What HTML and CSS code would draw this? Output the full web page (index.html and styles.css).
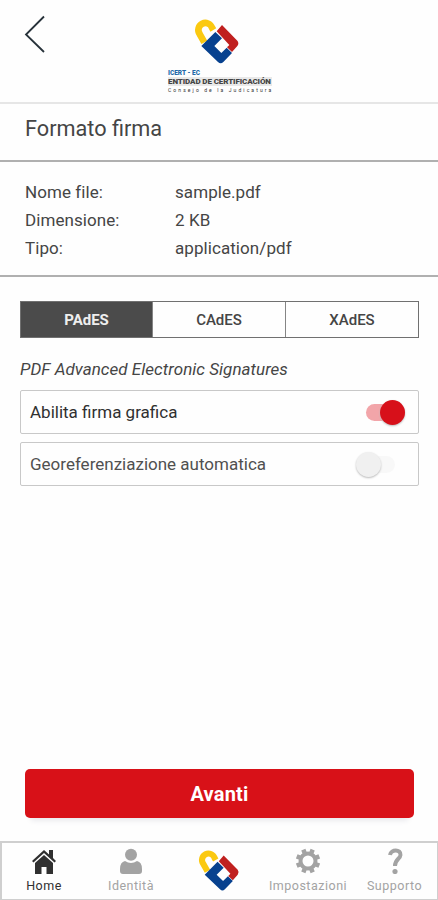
FILE: index.html
```html
<!DOCTYPE html>
<html lang="it">
<head>
    <meta charset="UTF-8">
    <meta name="viewport" content="width=device-width, initial-scale=1.0">
    <title>Formato firma</title>
    <link rel="stylesheet" href="styles.css">
</head>
<body>
    <svg width="0" height="0" class="defs">
        <symbol id="logo" viewBox="0 0 144 144">
            <path d="M31 73 L17 48 A21 21 0 1 1 54 29 L58 36" fill="none" stroke="#fbc910" stroke-width="20"/>
            <path d="M22 84 L64 42 L84 61 L61 84 L82 105 L98 89 L114 105 L88 132 Q80 140 72 132 Z" fill="#07418f"/>
            <path d="M84 21 L130 68 Q136 76 130 84 L114 102 L99 88 L106 81 L68 40 Z" fill="#c0201f"/>
        </symbol>
    </svg>
    <div id="container">
        <header>
            <button class="back" aria-label="Indietro">
                <svg width="22" height="40" viewBox="0 0 22 40"><path d="M20 2.500 L2 20.500 L20 38" fill="none" stroke="#27323a" stroke-width="1.8"/></svg>
            </button>
            <div class="brand">
                <svg class="brand-logo"><use href="#logo"/></svg>
                <span class="brand-code">ICERT - EC</span>
                <span class="brand-name">ENTIDAD DE CERTIFICACIÓN</span>
                <span class="brand-sub">Consejo de la Judicatura</span>
            </div>
        </header>
        <h1>Formato firma</h1>
        <dl class="file-info">
            <dt>Nome file:</dt><dd>sample.pdf</dd>
            <dt>Dimensione:</dt><dd>2 KB</dd>
            <dt>Tipo:</dt><dd>application/pdf</dd>
        </dl>
        <main>
            <div class="tabs">
                <button class="active">PAdES</button>
                <button>CAdES</button>
                <button>XAdES</button>
            </div>
            <p class="description">PDF Advanced Electronic Signatures</p>
            <div class="option dark">
                <span>Abilita firma grafica</span>
                <span class="switch on"><i></i></span>
            </div>
            <div class="option">
                <span>Georeferenziazione automatica</span>
                <span class="switch"><i></i></span>
            </div>
        </main>
        <button class="next">Avanti</button>
        <nav>
            <a class="selected">
                <svg width="26" height="26" viewBox="0 0 26 26"><path d="M1 13 L13 2 L18 6.5 V2 H22 V10 L25 13 L23.5 14.5 L13 5 L2.5 14.5 Z M4 15 L13 7 L22 15 V26 H15.500 V19 H10.500 V26 H4 Z" fill="currentColor"/></svg>
                <span>Home</span>
            </a>
            <a>
                <svg width="26" height="26" viewBox="0 0 26 26"><circle cx="13" cy="6.7" r="6" fill="currentColor"/><path d="M7 13 Q13 17 19 13 Q24 14 24 21 V23 Q24 26 21 26 H5 Q2 26 2 23 V21 Q2 14 7 13 Z" fill="currentColor"/></svg>
                <span>Identità</span>
            </a>
            <a class="nav-brand"><svg class="nav-logo"><use href="#logo"/></svg></a>
            <a>
                <svg width="26" height="26" viewBox="0 0 26 26"><circle cx="13" cy="13" r="7.5" fill="none" stroke="currentColor" stroke-width="4"/><g stroke="currentColor" stroke-width="4.500"><path id="tooth" d="M13 .8 V5 M13 21 V25.200" transform="rotate(22.5 13 13)"/><use href="#tooth" transform="rotate(45 13 13)"/><use href="#tooth" transform="rotate(90 13 13)"/><use href="#tooth" transform="rotate(135 13 13)"/></g></svg>
                <span>Impostazioni</span>
            </a>
            <a>
                <svg width="26" height="26" viewBox="0 0 26 26"><path d="M8 7 C9 1 19 1 18.500 7 C18.300 11 13 11 13 18" fill="none" stroke="currentColor" stroke-width="4"/><circle cx="13" cy="23.500" r="2.600" fill="currentColor"/></svg>
                <span>Supporto</span>
            </a>
        </nav>
    </div>
</body>
</html>
```
FILE: styles.css
```css
* {
    box-sizing: border-box;
}
body {
    margin: 0;
    background: #fefefe;
    color: #454545;
    font-family: Roboto, "Liberation Sans", sans-serif;
}
button {
    font-family: inherit;
    border: none;
    background: none;
    padding: 0;
}
.defs {
    display: block;
}
#container {
    display: flex;
    flex-direction: column;
    height: 900px;
}

header {
    display: grid;
    grid-template-columns: 1fr 106px 1fr;
    height: 104px;
    border-bottom: 2px solid #e6e6e6;
}
.back {
    justify-self: start;
    align-self: start;
    margin: 14px 0 0 24px;
    height: 40px;
}
.brand {
    display: flex;
    flex-direction: column;
    padding: 18px 0 0 2px;
    white-space: nowrap;
}
.brand-logo {
    width: 48px;
    height: 48px;
    margin-left: 26px;
}
.brand-code {
    font-size: 6.5px;
    line-height: 8px;
    margin-top: 3px;
    font-weight: 900;
    color: #2369a8;
}
.brand-name {
    font-size: 8px;
    line-height: 9px;
    font-weight: 900;
    letter-spacing: -0.1px;
    background: #e9e9e9;
}
.brand-sub {
    font-size: 5px;
    line-height: 8px;
    letter-spacing: 2.1px;
    color: #333;
}

h1 {
    margin: 0;
    height: 58px;
    padding-left: 25px;
    border-bottom: 2px solid #b0b0b0;
    font-size: 21.7px;
    line-height: 49px;
    font-weight: 400;
}
.file-info {
    display: grid;
    grid-template-columns: 150px 1fr;
    grid-auto-rows: 28px;
    margin: 0;
    height: 115px;
    padding: 16px 25px;
    border-bottom: 2px solid #b0b0b0;
    font-size: 17px;
    line-height: 28px;
    letter-spacing: 0.07px;
}
.file-info dd {
    margin: 0;
}

main {
    padding: 24px 19px 0 20px;
}
.tabs {
    display: grid;
    grid-template-columns: 131px 133px 1fr;
    height: 37px;
    border: 1px solid #707070;
}
.tabs button {
    font-size: 15px;
    font-weight: 500;
    color: #454545;
    border-left: 1px solid #858585;
}
.tabs .active {
    background: #4b4b4b;
    color: #eee;
    border: none;
    font-weight: 700;
}
.description {
    margin: 20px 0 9px;
    font-size: 17px;
    line-height: 23px;
    letter-spacing: 0.04px;
    font-style: italic;
}
.option {
    display: flex;
    justify-content: space-between;
    align-items: center;
    height: 44px;
    padding: 0 13px 0 9px;
    margin-bottom: 8px;
    border: 1px solid #c8c8c8;
    border-radius: 2px;
    font-size: 17px;
    color: #505050;
}
.dark {
    color: #303030;
}
.switch {
    display: flex;
    align-items: center;
    width: 39px;
    height: 17px;
    margin-right: 10px;
    border-radius: 9px;
    background: linear-gradient(90deg, transparent 12px, #f8f8f8 12px);
}
.switch i {
    width: 25px;
    height: 25px;
    border-radius: 50%;
    background: #f0f0f0;
    box-shadow: 0 1px 2px #bbb;
}
.switch.on {
    justify-content: flex-end;
    margin-right: 0;
    background: #f2a5a9;
}
.switch.on i {
    background: #d7101a;
}

.next {
    height: 49px;
    margin: auto 24px 23px 25px;
    border-radius: 5px;
    background: #d81118;
    color: #fff;
    font-size: 20px;
    font-weight: 700;
    letter-spacing: 0.2px;
    box-shadow: 0 8px 6px -6px #e5e5ea;
}
nav {
    display: grid;
    grid-template-columns: 84px 90px 88px 88px 1fr;
    height: 59px;
    border: 2px solid #cfcfcf;
    border-right-width: 1px;
    border-bottom-width: 1px;
}
nav a {
    display: flex;
    flex-direction: column;
    align-items: center;
    padding-top: 5px;
    color: #a3a3a3;
    font-size: 12.5px;
    line-height: 17px;
    letter-spacing: 0.5px;
}
nav a span {
    margin-top: 3px;
}
nav .selected {
    color: #303030;
}
.nav-brand .nav-logo {
    width: 44px;
    height: 44px;
    margin-top: 1px;
}
```
